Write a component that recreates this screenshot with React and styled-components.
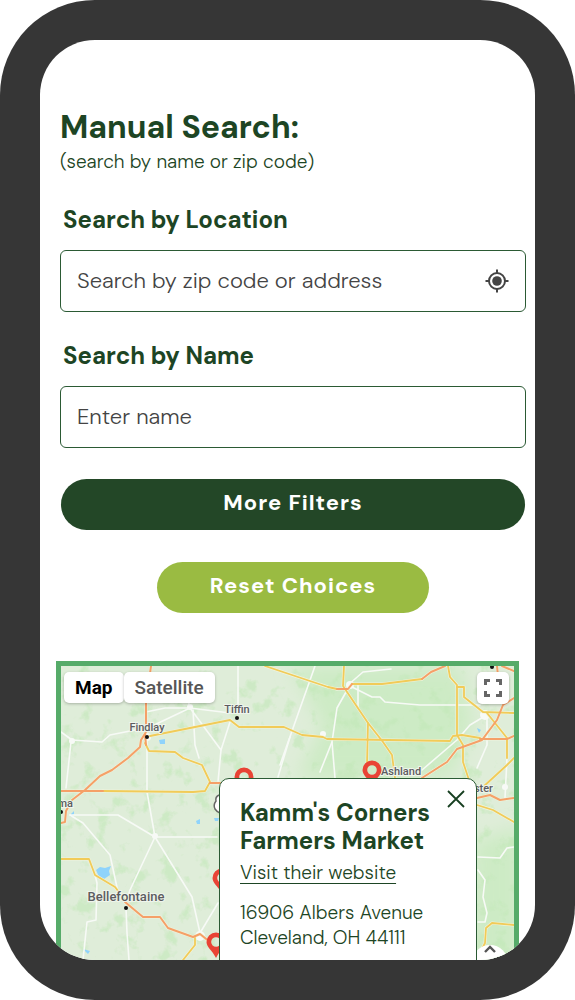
import React, { useState } from "react";
import styled, { createGlobalStyle } from "styled-components";

const roads = {
  local: [
    "M0 66 L11 74 L41 76 L49 69 L89 61 L129 42 L169 47",
    "M10 76 L5 122",
    "M177 0 V40",
    "M132 44 L134 79 L138 92",
    "M85 46 L104 42 L129 42 L126 30 L110 14",
    "M129 42 L160 84 L169 56",
    "M160 84 L157 116",
    "M86 72 V126 L94 171",
    "M229 71 L217 111",
    "M9 149 H57 L94 171 H156",
    "M94 171 L69 224 L65 236",
    "M94 171 L131 231 L139 267 L157 237",
    "M9 149 L22 157 L49 189 L57 226",
    "M34 209 L36 217 L35 254 L26 256 L22 294",
    "M65 242 L66 267 L68 294",
    "M254 0 L219 99",
    "M289 19 L276 42 L271 76 L259 106",
    "M271 76 L274 112",
    "M287 19 L311 31 L319 31 L324 36 L359 39 H419",
    "M287 19 L302 6 L330 3",
    "M297 19 V41",
    "M424 50 L409 59 L396 74 L361 104",
    "M426 50 V79 L416 102",
    "M446 92 L444 132",
    "M417 191 L439 192 L446 182 L453 181",
    "M417 204 L424 214 L422 231 L426 247 L424 256 L417 256",
  ],
  state: [
    "M89 70 L169 54 L178 61 L223 61 L241 69 L262 71 L266 73 L389 75 L392 70 L401 69 L419 72",
    "M84 77 L88 85 L114 86 L122 92 L141 99 L149 116 L144 125 L132 126 L42 125",
    "M0 193 H28 L34 209 L54 221 L64 234",
    "M134 272 V279 L122 294",
    "M204 0 L219 5 L267 21 L276 23",
    "M291 18 H321 L361 13",
    "M283 0 L282 20 L307 57 L322 76 L331 89 L334 112",
    "M307 57 L306 98",
    "M387 0 L389 11 L396 19 V69 L402 79 V96 L408 114",
    "M396 21 H403 V31 L422 46 L453 47",
    "M426 47 L446 72 V92",
    "M453 92 L446 99 L422 121",
    "M416 139 L432 144 L453 156",
    "M453 259 L431 257 L425 262 L424 277 L417 291",
  ],
  highway: [
    "M90 0 L85 37 L85 66 L80 74 L79 81 L67 92 L51 104 L39 110 L24 124 L11 134 L5 145 L4 156 L0 157",
    "M84 68 L85 79",
    "M0 125 H42",
    "M149 117 H159",
    "M64 236 L82 251 L99 251 L107 262 L132 271 L139 268 L149 276",
    "M276 23 H287 L291 18",
    "M361 13 L370 6 L384 0",
    "M436 0 L437 10",
    "M441 0 L453 5",
    "M453 32 L442 39 L436 54 L421 74 L396 83 L386 96 L361 112",
    "M419 73 H446 L453 70",
    "M416 132 L429 129 L439 134 L453 132",
  ],
};

const lakes = [
  "M35 204 L39 201 L44 202 L50 200 L48 205 L49 209 L43 213 L38 211 Z",
  "M98 74 L104 73 L104 78 L99 78 Z",
  "M9 149 L13 145 L13 148 L10 151 Z",
  "M135 155 L139 153 L139 158 L136 158 Z",
  "M153 152 L158 152 L157 155 L154 155 Z",
  "M22 283 L29 285 L27 288 Z",
  "M416 62 L420 64 L418 67 Z",
];

const towns = [
  { name: "Tiffin", x: 176, y: 47, dot: [176, 52] },
  { name: "Findlay", x: 86, y: 65, dot: [86, 71] },
  { name: "Bellefontaine", x: 65, y: 235, size: 13, dot: [65, 242] },
  { name: "Ashland", x: 320, y: 109, anchor: "start" },
  { name: "Wooster", x: 432, y: 126, anchor: "end" },
  { name: "Lima", x: 12, y: 141, anchor: "end", dot: [0, 146] },
];

const pins = [
  [183, 111],
  [311, 104],
  [161, 212],
  [155, 276],
];

const MapDrawing = () => (
  <MapSvg viewBox="0 0 453 294" preserveAspectRatio="xMinYMin slice" aria-hidden="true">
    <defs>
      <filter
        id="woods"
        x="0"
        y="0"
        width="100%"
        height="100%"
        colorInterpolationFilters="sRGB"
      >
        <feTurbulence type="fractalNoise" baseFrequency="0.06" numOctaves="4" seed="8" />
        <feColorMatrix values="0 0 0 0 0.76  0 0 0 0 0.91  0 0 0 0 0.72  0 6 0 0 -3.4" />
      </filter>
      <filter id="soft">
        <feGaussianBlur stdDeviation="9" />
      </filter>
    </defs>
    <rect width="453" height="294" fill="#dfedd9" />
    <g fill="#cdebc5" filter="url(#soft)">
      <path d="M230 0 H400 L412 60 L390 112 H236 L262 60 Z" />
      <path d="M412 176 L460 160 V300 H410 Z" />
    </g>
    <rect width="453" height="294" filter="url(#woods)" opacity="0.6" />
    <g fill="#8fd3fb">
      {lakes.map((d) => (
        <path key={d} d={d} />
      ))}
    </g>
    <g fill="#f8faf7">
      <circle cx="129" cy="41" r="3" />
      <circle cx="11" cy="75" r="3" />
      <circle cx="94" cy="170" r="3" />
      <circle cx="139" cy="270" r="5" />
      <circle cx="289" cy="19" r="4" />
      <circle cx="262" cy="68" r="3" />
      <circle cx="424" cy="49" r="5" />
      <circle cx="444" cy="121" r="3" />
      <circle cx="86" cy="71" r="4" />
    </g>
    <g fill="none" strokeLinejoin="round" strokeLinecap="round">
      {roads.local.map((d) => (
        <path key={d} d={d} stroke="#f7faf6" strokeWidth="1.6" />
      ))}
      {[...roads.state, ...roads.highway].map((d) => (
        <path key={d} d={d} stroke="#f0f4dd" strokeWidth="3" />
      ))}
      {roads.state.map((d) => (
        <path key={d} d={d} stroke="#f1cb58" strokeWidth="1.8" />
      ))}
      {roads.highway.map((d) => (
        <path key={d} d={d} stroke="#f5a068" strokeWidth="2" />
      ))}
    </g>
    <path
      d="M158 129 q-4 2 -3 6 q-3 4 -1 8 q2 3 5 4"
      fill="#fff"
      stroke="#666"
      strokeWidth="1.5"
    />
    {towns.map((town) => (
      <g key={town.name}>
        {town.dot && <circle cx={town.dot[0]} cy={town.dot[1]} r="2" fill="#111" />}
        <TownName x={town.x} y={town.y} fontSize={town.size || 11} textAnchor={town.anchor || "middle"}>
          {town.name}
        </TownName>
      </g>
    ))}
    <circle cx="431" cy="1" r="2" fill="#111" />
    {pins.map(([x, y]) => (
      <path
        key={x}
        transform={`translate(${x} ${y})`}
        d="M0 -9.5 A9.5 9.5 0 0 0 -9.5 0 C-9.5 5 -4 8 0 16 C4 8 9.5 5 9.5 0 A9.5 9.5 0 0 0 0 -9.5 Z M0 -4.8 A4.8 4.8 0 1 1 0 4.8 A4.8 4.8 0 1 1 0 -4.8 Z"
        fill="#e94335"
        fillRule="evenodd"
      />
    ))}
    <circle cx="429" cy="297" r="18" fill="#fff" />
    <path d="M424 286 L429 281 L434 286" fill="none" stroke="#555" strokeWidth="2.4" />
  </MapSvg>
);

const App = () => {
  const [cardOpen, setCardOpen] = useState(true);
  const [view, setView] = useState("map");

  return (
    <React.Fragment>
      <GlobalStyle />
      <Phone>
        <Screen>
          <SearchForm onSubmit={(e) => e.preventDefault()}>
            <Title>Manual Search:</Title>
            <Hint>(search by name or zip code)</Hint>

            <Label htmlFor="location">Search by Location</Label>
            <Field>
              <Input id="location" type="text" placeholder="Search by zip code or address" />
              <LocateButton type="button" aria-label="Use my location">
                <svg width="24" height="24" viewBox="0 0 24 24" fill="none" stroke="#444" strokeWidth="2">
                  <circle cx="12" cy="12" r="8" />
                  <circle cx="12" cy="12" r="4.8" fill="#444" stroke="none" />
                  <path d="M12 0.5 V4 M12 20 V23.5 M0.5 12 H4 M20 12 H23.5" />
                </svg>
              </LocateButton>
            </Field>

            <Label htmlFor="name">Search by Name</Label>
            <Field>
              <Input id="name" type="text" placeholder="Enter name" />
            </Field>

            <FiltersButton type="button">More Filters</FiltersButton>
            <ResetButton type="reset">Reset Choices</ResetButton>
          </SearchForm>

          <MapBox>
            <MapDrawing />
            <MapControls>
              <MapType type="button" $active={view === "map"} onClick={() => setView("map")}>
                Map
              </MapType>
              <MapType
                type="button"
                $active={view === "satellite"}
                onClick={() => setView("satellite")}
              >
                Satellite
              </MapType>
              <FullscreenButton type="button" aria-label="Full screen">
                <svg width="18" height="18" viewBox="0 0 18 18" fill="none" stroke="#666" strokeWidth="3">
                  <path d="M1.5 6 V1.5 H6 M12 1.5 H16.5 V6 M16.5 12 V16.5 H12 M6 16.5 H1.5 V12" />
                </svg>
              </FullscreenButton>
            </MapControls>

            {cardOpen && (
              <MarketCard>
                <CloseButton type="button" aria-label="Close" onClick={() => setCardOpen(false)}>
                  <svg width="18" height="18" viewBox="0 0 18 18" stroke="#173f20" strokeWidth="1.8">
                    <path d="M1 1 L17 17 M17 1 L1 17" />
                  </svg>
                </CloseButton>
                <MarketName>Kamm's Corners Farmers Market</MarketName>
                <WebsiteLink href="#website">Visit their website</WebsiteLink>
                <Address>
                  16906 Albers Avenue
                  <br />
                  Cleveland, OH 44111
                </Address>
              </MarketCard>
            )}
          </MapBox>
        </Screen>
      </Phone>
    </React.Fragment>
  );
};

export default App;

const GlobalStyle = createGlobalStyle`
  * {
    box-sizing: border-box;
  }

  body {
    margin: 0;
    background: #fff;
    color: #1d4524;
    font-family: "DM Sans", Inter, sans-serif;
  }

  button,
  input {
    font-family: inherit;
  }
`;

const Phone = styled.div`
  display: flex;
  height: 100vh;
  padding: 40px;
  background: #363636;
  border-radius: 95px;
`;

const Screen = styled.main`
  flex: 1;
  min-width: 0;
  display: flex;
  flex-direction: column;
  overflow: hidden;
  background: #fff;
  border-radius: 55px;
`;

const SearchForm = styled.form`
  display: flex;
  flex-direction: column;
  padding: 69px 9px 48px 20px;
`;

const Title = styled.h1`
  margin: 0;
  font-size: 32px;
  font-weight: 700;
  line-height: 36px;
`;

const Hint = styled.p`
  margin: 3px 0 29px;
  font-size: 19px;
  font-weight: 300;
  line-height: 28px;
`;

const Label = styled.label`
  padding-left: 3px;
  margin-bottom: 15px;
  font-size: 24px;
  font-weight: 700;
  line-height: 30px;
`;

const Field = styled.div`
  display: flex;
  align-items: center;
  height: 62px;
  padding: 0 16px;
  margin-bottom: 29px;
  border: 1px solid #2b5a34;
  border-radius: 6px;
`;

const Input = styled.input`
  flex: 1;
  min-width: 0;
  height: 100%;
  padding: 0 0 2px;
  border: 0;
  outline: 0;
  background: transparent;
  color: #333;
  font-size: 22px;
  font-weight: 300;

  &::placeholder {
    color: #444;
    opacity: 1;
  }
`;

const LocateButton = styled.button`
  display: flex;
  padding: 0;
  border: 0;
  background: transparent;
  cursor: pointer;
`;

const PillButton = styled.button`
  height: 51px;
  padding: 0 20px 4px;
  border: 0;
  border-radius: 26px;
  color: #fff;
  font-size: 22px;
  font-weight: 700;
  letter-spacing: 1px;
  cursor: pointer;
`;

const FiltersButton = styled(PillButton)`
  margin: 2px 1px 32px;
  background: #234727;
`;

const ResetButton = styled(PillButton)`
  align-self: center;
  width: 272px;
  background: #9abb42;
`;

const MapBox = styled.section`
  flex: 1;
  min-height: 0;
  position: relative;
  margin: 0 16px;
  border: 5px solid #56ab69;
  border-bottom: 0;
  overflow: hidden;
`;

const MapSvg = styled.svg`
  display: block;
  position: absolute;
  inset: 0;
  width: 100%;
  height: 100%;
`;

const TownName = styled.text`
  fill: #5c5c60;
  stroke: #eff5ec;
  stroke-width: 2px;
  paint-order: stroke;
  font-family: Roboto, sans-serif;
  font-weight: 500;
`;

const MapControls = styled.div`
  position: relative;
  display: flex;
  padding: 6px 5px 0 3px;
`;

const MapType = styled.button`
  height: 31px;
  padding: 0 11px;
  border: 0;
  border-radius: 5px;
  background: #fff;
  box-shadow: 0 1px 3px rgba(0, 0, 0, 0.25);
  color: ${({ $active }) => ($active ? "#000" : "#565656")};
  font-family: Roboto, sans-serif;
  font-size: 19px;
  font-weight: ${({ $active }) => ($active ? 700 : 500)};
  cursor: pointer;
`;

const FullscreenButton = styled.button`
  display: grid;
  place-items: center;
  width: 32px;
  height: 32px;
  margin-left: auto;
  padding: 0;
  border: 0;
  border-radius: 5px;
  background: #fff;
  box-shadow: 0 1px 3px rgba(0, 0, 0, 0.25);
  cursor: pointer;
`;

const MarketCard = styled.article`
  position: absolute;
  top: 112px;
  left: 158px;
  right: 37px;
  padding: 20px 20px 24px;
  background: #fff;
  border: 1px solid #2b5a34;
  border-radius: 10px;
`;

const CloseButton = styled.button`
  position: absolute;
  top: 11px;
  right: 11px;
  display: flex;
  padding: 0;
  border: 0;
  background: transparent;
  cursor: pointer;
`;

const MarketName = styled.h2`
  margin: 0 0 5px;
  font-size: 24px;
  font-weight: 700;
  line-height: 28px;
`;

const WebsiteLink = styled.a`
  color: inherit;
  font-size: 19px;
  font-weight: 300;
  line-height: 26px;
  text-decoration-thickness: 1px;
  text-underline-offset: 4px;
`;

const Address = styled.address`
  margin-top: 14px;
  font-size: 19px;
  font-style: normal;
  font-weight: 300;
  line-height: 25px;
`;
